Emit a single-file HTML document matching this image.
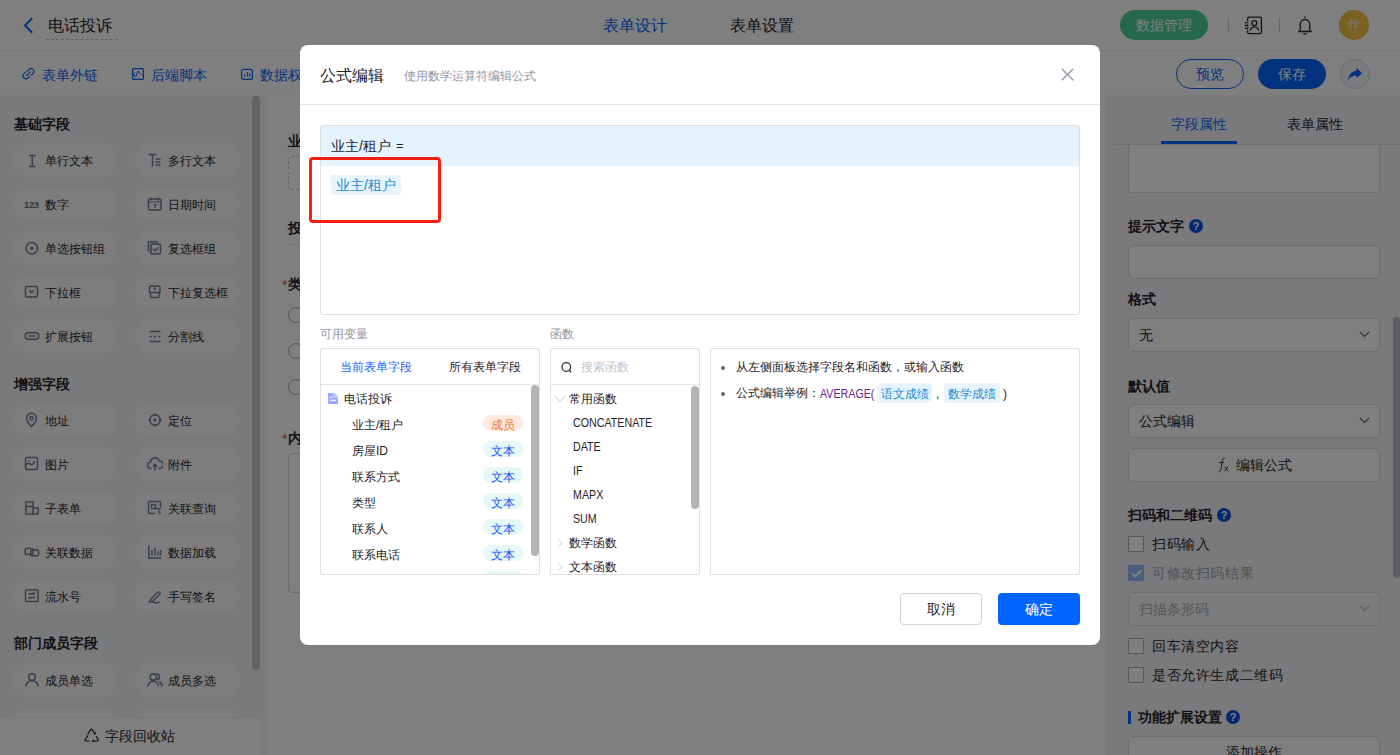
<!DOCTYPE html>
<html><head><meta charset="utf-8">
<style>
*{box-sizing:border-box;margin:0;padding:0}
html,body{width:1400px;height:755px;overflow:hidden;background:#fff;font-family:"Liberation Sans",sans-serif;color:#1f2329}
.a{position:absolute}
.t{position:absolute;white-space:nowrap;line-height:1}
.nx{transform:scaleX(.89);transform-origin:0 0}
/* header */
#hdr{left:0;top:0;width:1400px;height:51px;background:#fff;border-bottom:1px solid #efefef}
#bar2{left:0;top:51px;width:1400px;height:45px;background:#fff;border-bottom:1px solid #f9f9fa}
#side{left:0;top:96px;width:268px;height:659px;background:#f3f4f7}
.sec{font-size:14px;font-weight:bold;color:#1f2329}
.pill{position:absolute;width:105px;height:34px;border-radius:17px;background:#fbfbfc}
.pill span{position:absolute;left:33px;top:12px;font-size:12px;line-height:12px;color:#1f2329;white-space:nowrap}
.pill svg{position:absolute;left:12px;top:9px}
#canvas{left:268px;top:96px;width:838px;height:659px;background:#fff}
#rp{left:1106px;top:96px;width:294px;height:659px;background:#f4f5f8;border-left:1px solid #f0f1f4}
.inp{position:absolute;left:1128px;width:252px;border:1px solid #dcdee3;border-radius:4px;background:#fff}
.lbl{font-size:14px;font-weight:bold;color:#1f2329}
.cb{position:absolute;left:1128px;width:16px;height:16px;border:1px solid #a9adb5;border-radius:1px;background:#fff}
.help{position:absolute;width:14px;height:14px;border-radius:50%;background:#0b4fe0;color:#fff;font-size:11px;line-height:14px;text-align:center;font-weight:bold}
#mask{left:0;top:0;width:1400px;height:755px;background:rgba(0,0,0,.5)}
/* modal */
#modal{left:300px;top:45px;width:800px;height:600px;background:#fff;border-radius:8px;overflow:hidden}
</style></head><body>

<div id="hdr" class="a"></div>
<svg class="a" style="left:22px;top:17px" width="12" height="17" viewBox="0 0 12 17"><path d="M9.5 2 L3 8.5 L9.5 15" fill="none" stroke="#0565fa" stroke-width="2" stroke-linecap="square"/></svg>
<div class="t" style="left:48px;top:18px;font-size:16px;color:#1f2329">电话投诉</div>
<div class="a" style="left:46px;top:39px;width:72px;border-top:1px dashed #c6c9cf"></div>
<div class="t" style="left:603px;top:18px;font-size:16px;color:#0565fa">表单设计</div>
<div class="t" style="left:730px;top:18px;font-size:16px;color:#1f2329">表单设置</div>
<div class="a" style="left:1120px;top:10px;width:88px;height:30px;border-radius:15px;background:#4ad097"></div>
<div class="t" style="left:1136px;top:18px;font-size:14px;color:#fff">数据管理</div>
<div class="a" style="left:1228px;top:18px;width:1px;height:14px;background:#c9ccd2"></div>
<svg class="a" style="left:1244px;top:16px" width="20" height="19" viewBox="0 0 20 19"><path d="M3.6 5.2V2.6q0-1.4 1.4-1.4h11q1.4 0 1.4 1.4v13.6q0 1.4-1.4 1.4H5q-1.4 0-1.4-1.4v-2.4M3.6 8v.6M3.6 10.8v.6" fill="none" stroke="#26292e" stroke-width="1.3"/><path d="M.8 6.6h3.6M.8 9.5h3.6M.8 12.3h3.6" stroke="#26292e" stroke-width="1.3"/><circle cx="10.3" cy="7.1" r="2.5" fill="none" stroke="#26292e" stroke-width="1.3"/><path d="M6.3 14.3a4.1 4.1 0 0 1 8.1 0" fill="none" stroke="#26292e" stroke-width="1.3"/></svg>
<div class="a" style="left:1279px;top:18px;width:1px;height:14px;background:#c9ccd2"></div>
<svg class="a" style="left:1297px;top:16px" width="16" height="19" viewBox="0 0 16 19"><path d="M8 .6v1.6M3.2 14.3V8.3a4.8 4.8 0 0 1 9.6 0v6l1.4 1.2H1.8z" fill="none" stroke="#26292e" stroke-width="1.3" stroke-linejoin="round"/><path d="M6.3 17.8h3.4" stroke="#26292e" stroke-width="1.3"/></svg>
<div class="a" style="left:1339px;top:10px;width:30px;height:30px;border-radius:50%;background:#f2c443"></div>
<div class="t" style="left:1348px;top:18px;font-size:12px;color:rgba(255,255,255,.85)">作</div>
<div id="bar2" class="a"></div>
<svg class="a" style="left:22px;top:67px" width="13" height="13" viewBox="0 0 13 13"><path d="M5.2 4.1l1.7-1.7a2.9 2.9 0 0 1 4.1 4.1L9.3 8.2M7.6 9.3l-1.7 1.7a2.9 2.9 0 0 1-4.1-4.1L3.5 5.2M4.8 8.4l3.6-3.6" fill="none" stroke="#0565fa" stroke-width="1.2" stroke-linecap="round"/></svg>
<div class="t" style="left:42px;top:68px;font-size:14px;color:#0565fa">表单外链</div>
<svg class="a" style="left:132px;top:68px" width="12" height="12" viewBox="0 0 12 12"><rect x=".6" y=".6" width="10.8" height="10.8" rx="1" fill="none" stroke="#0565fa" stroke-width="1.2"/><path d="M.8 6.5l2.3-2M.8 6.5l2.5 2M3.8 8.8l2.3-5.8 2.5 3M11.2 6.5l-1 .8" fill="none" stroke="#0565fa" stroke-width="1"/></svg>
<div class="t" style="left:151px;top:68px;font-size:14px;color:#0565fa">后端脚本</div>
<svg class="a" style="left:241px;top:68px" width="12" height="12" viewBox="0 0 12 12"><rect x=".6" y="1.4" width="10.8" height="10" rx="2" fill="none" stroke="#0565fa" stroke-width="1.2"/><path d="M3.5 8.8V6.2M6.3 8.8V4M8.6 8.8V5.4" stroke="#0565fa" stroke-width="1.1"/></svg>
<div class="t" style="left:260px;top:68px;font-size:14px;color:#0565fa">数据权限</div>
<div class="a" style="left:1176px;top:59px;width:68px;height:30px;border-radius:15px;border:1px solid #0565fa;background:#fff"></div>
<div class="t" style="left:1196px;top:67px;font-size:14px;color:#0565fa">预览</div>
<div class="a" style="left:1258px;top:59px;width:68px;height:30px;border-radius:15px;background:#0565fa"></div>
<div class="t" style="left:1278px;top:67px;font-size:14px;color:#fff">保存</div>
<div class="a" style="left:1340px;top:59px;width:30px;height:30px;border-radius:50%;background:#f5f7fc;border:1px solid #cfd8ea"></div>
<svg class="a" style="left:1347px;top:66px" width="16" height="16" viewBox="0 0 16 16"><path d="M9.5 1.8L15 7.3l-5.5 5V9.6c-3.7 0-6.3 1.3-8.3 4.4.4-5 3.2-8.8 8.3-9.6z" fill="#0565fa"/></svg>
<div id="side" class="a"></div>
<div class="t sec" style="left:14px;top:117px">基础字段</div>
<div class="pill" style="left:12px;top:143px"><svg width="16" height="16" viewBox="0 0 16 16"><path d="M5 3.5h6.5M5 14.5h6.5M8.2 3.5v11" fill="none" stroke="#717c97" stroke-width="1.5"/></svg><span>单行文本</span></div>
<div class="pill" style="left:135px;top:143px"><svg width="16" height="16" viewBox="0 0 16 16"><path d="M1.5 2.5h8M5.5 2.5v12M8.5 7h5M8.5 10h5M8.5 13h5" fill="none" stroke="#717c97" stroke-width="1.5"/></svg><span>多行文本</span></div>
<div class="pill" style="left:12px;top:187px"><svg width="16" height="16" viewBox="0 0 16 16"><text x="0" y="11.5" font-size="9.5" font-weight="bold" fill="#5f6a85" font-family="Liberation Sans" letter-spacing="-0.4">123</text></svg><span>数字</span></div>
<div class="pill" style="left:135px;top:187px"><svg width="16" height="16" viewBox="0 0 16 16"><rect x="1.5" y="3" width="12.5" height="11" rx="1.5" fill="none" stroke="#717c97" stroke-width="1.5"/><path d="M1.5 6h12.5M4.5 1.5v3M11 1.5v3M6.5 8.5h2.5l-1.3 3.5" fill="none" stroke="#717c97" stroke-width="1.2"/></svg><span>日期时间</span></div>
<div class="pill" style="left:12px;top:231px"><svg width="16" height="16" viewBox="0 0 16 16"><circle cx="7.8" cy="8.2" r="5.7" fill="none" stroke="#717c97" stroke-width="1.5"/><circle cx="7.8" cy="8.2" r="1.7" fill="#717c97"/></svg><span>单选按钮组</span></div>
<div class="pill" style="left:135px;top:231px"><svg width="16" height="16" viewBox="0 0 16 16"><rect x="4" y="4" width="9.5" height="10" rx="1" fill="none" stroke="#717c97" stroke-width="1.5"/><path d="M1.5 11.5V1.8h9.5" fill="none" stroke="#717c97" stroke-width="1.5"/><path d="M6 8.8l2 2 3.3-3.6" fill="none" stroke="#717c97" stroke-width="1.5"/></svg><span>复选框组</span></div>
<div class="pill" style="left:12px;top:275px"><svg width="16" height="16" viewBox="0 0 16 16"><rect x="1.5" y="2.5" width="12" height="10.5" rx="1.5" fill="none" stroke="#717c97" stroke-width="1.5"/><path d="M5.2 6.2l2.3 2.3 2.3-2.3" fill="none" stroke="#717c97" stroke-width="1.5"/></svg><span>下拉框</span></div>
<div class="pill" style="left:135px;top:275px"><svg width="16" height="16" viewBox="0 0 16 16"><path d="M2.5 8.5V3.5a1.5 1.5 0 0 1 1.5-1.5h7.5a1.5 1.5 0 0 1 1.5 1.5v5zM3.5 8.5v4a1 1 0 0 0 1 1h6.5a1 1 0 0 0 1-1v-4M6.8 3.8l1 1.2 1-1.2" fill="none" stroke="#717c97" stroke-width="1.5"/></svg><span>下拉复选框</span></div>
<div class="pill" style="left:12px;top:319px"><svg width="16" height="16" viewBox="0 0 16 16"><rect x="1.2" y="4.8" width="13.5" height="6.5" rx="3.25" fill="none" stroke="#717c97" stroke-width="1.5"/><path d="M4.5 8h7" fill="none" stroke="#717c97" stroke-width="1.5"/></svg><span>扩展按钮</span></div>
<div class="pill" style="left:135px;top:319px"><svg width="16" height="16" viewBox="0 0 16 16"><path d="M2.5 3.5h11M2.5 13.5h11M2.5 8.5h2.5M6.7 8.5h2.6M11 8.5h2.5" fill="none" stroke="#717c97" stroke-width="1.5"/></svg><span>分割线</span></div>
<div class="t sec" style="left:14px;top:377px">增强字段</div>
<div class="pill" style="left:12px;top:403px"><svg width="16" height="16" viewBox="0 0 16 16"><path d="M7.5 14.5s-5-4.6-5-8.3a5 5 0 0 1 10 0c0 3.7-5 8.3-5 8.3z" fill="none" stroke="#717c97" stroke-width="1.5"/><circle cx="7.5" cy="6.2" r="1.7" fill="none" stroke="#717c97" stroke-width="1.5"/></svg><span>地址</span></div>
<div class="pill" style="left:135px;top:403px"><svg width="16" height="16" viewBox="0 0 16 16"><circle cx="8" cy="8" r="5.2" fill="none" stroke="#717c97" stroke-width="1.5"/><circle cx="8" cy="8" r="1.5" fill="#717c97"/><path d="M8 1.5v2.5M8 12v2.5M1.5 8h2.5M12 8h2.5" fill="none" stroke="#717c97" stroke-width="1.5"/></svg><span>定位</span></div>
<div class="pill" style="left:12px;top:447px"><svg width="16" height="16" viewBox="0 0 16 16"><rect x="1.5" y="1.5" width="12" height="12" rx="1.5" fill="none" stroke="#717c97" stroke-width="1.5"/><path d="M1.8 9.5c1.5-2.5 3-3 4.5-1.5s3 .3 4.5-3" fill="none" stroke="#717c97" stroke-width="1.5"/><circle cx="5" cy="5" r=".9" fill="#717c97"/></svg><span>图片</span></div>
<div class="pill" style="left:135px;top:447px"><svg width="16" height="16" viewBox="0 0 16 16"><path d="M4.5 12.5H4a3.2 3.2 0 0 1-.5-6.4A4.5 4.5 0 0 1 12.2 5a3.4 3.4 0 0 1 .3 7.5H11.5M8 14.5V8.5M5.8 10.5L8 8.3l2.2 2.2" fill="none" stroke="#717c97" stroke-width="1.5"/></svg><span>附件</span></div>
<div class="pill" style="left:12px;top:491px"><svg width="16" height="16" viewBox="0 0 16 16"><path d="M2 2h7v12H2zM9 8h5v6H9M2 6.5h7" fill="none" stroke="#717c97" stroke-width="1.5"/></svg><span>子表单</span></div>
<div class="pill" style="left:135px;top:491px"><svg width="16" height="16" viewBox="0 0 16 16"><path d="M13.5 8V2.5a1 1 0 0 0-1-1h-10a1 1 0 0 0-1 1v10a1 1 0 0 0 1 1H8" fill="none" stroke="#717c97" stroke-width="1.5"/><rect x="4.5" y="4.5" width="4" height="4" fill="none" stroke="#717c97" stroke-width="1.5"/><path d="M8.5 8.5h3l1.8 1.8M11 11l2.5 2.5" fill="none" stroke="#717c97" stroke-width="1.5"/></svg><span>关联查询</span></div>
<div class="pill" style="left:12px;top:535px"><svg width="16" height="16" viewBox="0 0 16 16"><rect x="1.2" y="4.5" width="7.8" height="6" rx="1.8" fill="none" stroke="#717c97" stroke-width="1.5"/><rect x="6.8" y="5.8" width="7.8" height="6" rx="1.8" fill="none" stroke="#717c97" stroke-width="1.5"/></svg><span>关联数据</span></div>
<div class="pill" style="left:135px;top:535px"><svg width="16" height="16" viewBox="0 0 16 16"><path d="M1.8 1.5v12.5H14.5M5 11.5V6M8 11.5V4M11 11.5V7.5M13.5 11.5V6" fill="none" stroke="#717c97" stroke-width="1.5"/></svg><span>数据加载</span></div>
<div class="pill" style="left:12px;top:579px"><svg width="16" height="16" viewBox="0 0 16 16"><rect x="1.5" y="2" width="12.5" height="11.5" rx="1" fill="none" stroke="#717c97" stroke-width="1.5"/><path d="M4.5 5.8h6.5M4.5 9.5h6.5M9 4.5l1.5 1.3M6 10.8L4.5 9.5" fill="none" stroke="#717c97" stroke-width="1.5"/></svg><span>流水号</span></div>
<div class="pill" style="left:135px;top:579px"><svg width="16" height="16" viewBox="0 0 16 16"><path d="M3.5 11.5l7.2-7.2a1.4 1.4 0 0 1 2 2L5.5 13.5H3.5zM1.5 14.5c2-1 3.5-1 5 0s3.5.5 6-.5" fill="none" stroke="#717c97" stroke-width="1.5"/></svg><span>手写签名</span></div>
<div class="t sec" style="left:14px;top:636px">部门成员字段</div>
<div class="pill" style="left:12px;top:663px"><svg width="16" height="16" viewBox="0 0 16 16"><circle cx="8" cy="5" r="3.3" fill="none" stroke="#717c97" stroke-width="1.5"/><path d="M2 14.5a6 6 0 0 1 12 0" fill="none" stroke="#717c97" stroke-width="1.5"/></svg><span>成员单选</span></div>
<div class="pill" style="left:135px;top:663px"><svg width="16" height="16" viewBox="0 0 16 16"><circle cx="6.3" cy="5" r="3.2" fill="none" stroke="#717c97" stroke-width="1.5"/><path d="M1 14.5a5.3 5.3 0 0 1 10.6 0M10 1.8a3.2 3.2 0 0 1 0 6.2M12.3 9.5a5.3 5.3 0 0 1 2.5 5" fill="none" stroke="#717c97" stroke-width="1.5"/></svg><span>成员多选</span></div>
<div class="pill" style="left:12px;top:707px"><svg width="16" height="16" viewBox="0 0 16 16"><circle cx="8" cy="5" r="3.3" fill="none" stroke="#717c97" stroke-width="1.5"/><path d="M2 14.5a6 6 0 0 1 12 0" fill="none" stroke="#717c97" stroke-width="1.5"/></svg><span>部门单选</span></div>
<div class="pill" style="left:135px;top:707px"><svg width="16" height="16" viewBox="0 0 16 16"><circle cx="6.3" cy="5" r="3.2" fill="none" stroke="#717c97" stroke-width="1.5"/><path d="M1 14.5a5.3 5.3 0 0 1 10.6 0M10 1.8a3.2 3.2 0 0 1 0 6.2M12.3 9.5a5.3 5.3 0 0 1 2.5 5" fill="none" stroke="#717c97" stroke-width="1.5"/></svg><span>部门多选</span></div>
<div class="a" style="left:252px;top:96px;width:8px;height:574px;border-radius:4px;background:#c4c6cb"></div>
<div class="a" style="left:0;top:717px;width:260px;height:38px;background:#fff;border-top:1px solid #eef0f3"></div>
<svg class="a" style="left:84px;top:728px" width="16" height="15" viewBox="0 0 16 15"><path d="M3.8 6.2L6.7 1.6q.8-1.1 1.6 0l2.4 4M12.2 8.2l2 3.6q.5 1.2-.8 1.2H8.8M5.8 13H1.9q-1.3 0-.7-1.2l1.4-2.4" fill="none" stroke="#1f2329" stroke-width="1.2"/><path d="M9.4 6.8l2.6-.6-.2-2.4zM9.8 11.3l-2 1.7 2 1.7zM1.8 7.8l1.6 1.9 1.1-2.4z" fill="#1f2329"/></svg>
<div class="t" style="left:105px;top:729px;font-size:14px;color:#1f2329">字段回收站</div>
<div id="canvas" class="a"></div>
<div class="t" style="left:288px;top:134px;font-size:14px;font-weight:bold;color:#1f2329">业主/租户</div>
<div class="a" style="left:288px;top:156px;width:300px;height:34px;border:1px dashed #c9ccd2;border-radius:4px"></div>
<div class="t" style="left:288px;top:221px;font-size:14px;font-weight:bold;color:#1f2329">投诉信息</div>
<div class="a" style="left:288px;top:244px;width:800px;height:1px;background:#e4e6ea"></div>
<div class="t" style="left:282px;top:278px;font-size:14px;color:#e8443a">*</div>
<div class="t" style="left:288px;top:277px;font-size:14px;font-weight:bold;color:#1f2329">类型</div>
<div class="a" style="left:288px;top:307px;width:16px;height:16px;border:1px solid #a5a9ba;border-radius:50%"></div>
<div class="a" style="left:288px;top:343px;width:16px;height:16px;border:1px solid #a5a9ba;border-radius:50%"></div>
<div class="a" style="left:288px;top:379px;width:16px;height:16px;border:1px solid #a5a9ba;border-radius:50%"></div>
<div class="t" style="left:282px;top:432px;font-size:14px;color:#e8443a">*</div>
<div class="t" style="left:288px;top:431px;font-size:14px;font-weight:bold;color:#1f2329">内容</div>
<div class="a" style="left:288px;top:453px;width:800px;height:140px;border:1px solid #d5d8dd;border-radius:4px"></div>
<div id="rp" class="a"></div>
<div class="inp" style="top:140px;height:53px;border-top:none;border-radius:0 0 4px 4px"></div>
<div class="a" style="left:1107px;top:96px;width:293px;height:48px;background:#f4f5f8"></div>
<div class="a" style="left:1114px;top:144px;width:286px;height:1px;background:#dcdfe4"></div>
<div class="a" style="left:1161px;top:141px;width:76px;height:3px;background:#0565fa"></div>
<div class="t" style="left:1171px;top:117px;font-size:14px;color:#0565fa">字段属性</div>
<div class="t" style="left:1287px;top:117px;font-size:14px;color:#1f2329">表单属性</div>
<div class="t lbl" style="left:1128px;top:219px">提示文字</div>
<div class="help" style="left:1189px;top:219px">?</div>
<div class="inp" style="top:245px;height:34px"></div>
<div class="t lbl" style="left:1128px;top:292px">格式</div>
<div class="inp" style="top:318px;height:34px"></div>
<div class="t" style="left:1139px;top:328px;font-size:14px;color:#1f2329">无</div>
<svg class="a" style="left:1359px;top:331px" width="11" height="7" viewBox="0 0 11 7"><path d="M.8 .8l4.7 4.7L10.2.8" fill="none" stroke="#555b64" stroke-width="1.2"/></svg>
<div class="t lbl" style="left:1128px;top:379px">默认值</div>
<div class="inp" style="top:404px;height:34px"></div>
<div class="t" style="left:1139px;top:414px;font-size:14px;color:#1f2329">公式编辑</div>
<svg class="a" style="left:1359px;top:417px" width="11" height="7" viewBox="0 0 11 7"><path d="M.8 .8l4.7 4.7L10.2.8" fill="none" stroke="#555b64" stroke-width="1.2"/></svg>
<div class="inp" style="top:448px;height:34px"></div>
<svg class="a" style="left:1217px;top:457px" width="14" height="16" viewBox="0 0 14 16"><path d="M8.3 1.3c-1.6-.6-2.6.2-2.9 2L4 12.5c-.3 1.8-1.2 2.5-2.5 2.2M1.8 5.5h5" fill="none" stroke="#3a3f47" stroke-width="1"/><path d="M7.6 9.6l3.6 4.6M11.2 9.6l-3.6 4.6" stroke="#3a3f47" stroke-width="1"/></svg>
<div class="t" style="left:1236px;top:458px;font-size:14px;color:#1f2329">编辑公式</div>
<div class="t lbl" style="left:1128px;top:508px">扫码和二维码</div>
<div class="help" style="left:1217px;top:508px">?</div>
<div class="cb" style="top:536px"></div>
<div class="t" style="left:1152px;top:537px;font-size:14px;color:#1f2329;letter-spacing:.6px">扫码输入</div>
<div class="cb" style="top:565px;background:#90bcff;border-color:#90bcff"></div>
<svg class="a" style="left:1131px;top:569px" width="11" height="9" viewBox="0 0 11 9"><path d="M1 4.3l3.2 3.2L10 1.5" fill="none" stroke="#fff" stroke-width="2"/></svg>
<div class="t" style="left:1152px;top:566px;font-size:14px;color:#9ea3ab;letter-spacing:.6px">可修改扫码结果</div>
<div class="inp" style="top:592px;height:34px;background:#f9f9fa"></div>
<div class="t" style="left:1139px;top:602px;font-size:14px;color:#a9adb4">扫描条形码</div>
<svg class="a" style="left:1359px;top:605px" width="11" height="7" viewBox="0 0 11 7"><path d="M.8 .8l4.7 4.7L10.2.8" fill="none" stroke="#b5b9c0" stroke-width="1.2"/></svg>
<div class="cb" style="top:638px"></div>
<div class="t" style="left:1152px;top:639px;font-size:14px;color:#1f2329;letter-spacing:.6px">回车清空内容</div>
<div class="cb" style="top:667px"></div>
<div class="t" style="left:1152px;top:668px;font-size:14px;color:#1f2329;letter-spacing:.6px">是否允许生成二维码</div>
<div class="a" style="left:1128px;top:711px;width:3px;height:13px;background:#0565fa"></div>
<div class="t lbl" style="left:1138px;top:710px">功能扩展设置</div>
<div class="help" style="left:1226px;top:710px">?</div>
<div class="inp" style="top:736px;height:34px;background:#fff"></div>
<div class="t" style="left:1226px;top:745px;font-size:14px;color:#1f2329">添加操作</div>
<div class="a" style="left:1393px;top:317px;width:7px;height:261px;border-radius:3px;background:#b9bcc2"></div>

<div id="mask" class="a"></div>

<div id="modal" class="a"></div>
<div class="t" style="left:320px;top:68px;font-size:16px;color:#1f2329">公式编辑</div>
<div class="t" style="left:404px;top:70px;font-size:12px;color:#8f959e">使用数学运算符编辑公式</div>
<svg class="a" style="left:1061px;top:68px" width="13" height="13" viewBox="0 0 13 13"><path d="M.7 .7l11.6 11.6M12.3 .7L.7 12.3" stroke="#8f959e" stroke-width="1.3"/></svg>
<div class="a" style="left:300px;top:104px;width:800px;height:1px;background:#e8e9eb"></div>
<div class="a" style="left:320px;top:125px;width:760px;height:190px;border:1px solid #e0e0e0;border-radius:2px"></div>
<div class="a" style="left:321px;top:126px;width:758px;height:40px;background:#e5f3fe"></div>
<div class="t" style="left:331px;top:139px;font-size:14px;color:#1f2329">业主/租户</div>
<div class="t" style="left:396px;top:139px;font-size:13px;color:#1f2329">=</div>
<div class="a" style="left:331px;top:175px;width:70px;height:20px;border-radius:2px;background:#e8f4fd"></div>
<div class="t" style="left:336px;top:178px;font-size:14px;color:#1a8ccf">业主/租户</div>
<div class="a" style="left:309px;top:157px;width:132px;height:66px;border:3px solid #fa1e12;border-radius:4px"></div>

<div class="t" style="left:320px;top:328px;font-size:12px;color:#8f959e">可用变量</div>
<div class="t" style="left:550px;top:328px;font-size:12px;color:#8f959e">函数</div>

<div class="a" style="left:320px;top:348px;width:220px;height:227px;border:1px solid #e0e0e0;border-radius:2px"></div>
<div class="a" style="left:321px;top:384px;width:218px;height:1px;background:#e6e6e6"></div>
<div class="t" style="left:340px;top:361px;font-size:12px;color:#1f5cff">当前表单字段</div>
<div class="t" style="left:449px;top:361px;font-size:12px;color:#1f2329">所有表单字段</div>
<svg class="a" style="left:328px;top:393px" width="10" height="11" viewBox="0 0 10 11"><path d="M0 0h6.3L10 3.7V11H0z" fill="#9aacff"/><path d="M6.3 0v3.7H10" fill="none" stroke="#e6ebff" stroke-width=".8"/><path d="M1.8 4.3h3M1.8 7.3h6.4" stroke="#fff" stroke-width="1"/></svg>
<div class="t" style="left:344px;top:393px;font-size:12px;color:#1f2329">电话投诉</div>
<div class="a" style="left:321px;top:385px;width:218px;height:189px;overflow:hidden">
<div class="t" style="left:31px;top:34px;font-size:12px;color:#1f2329">业主/租户</div>
<div class="a" style="left:162px;top:30px;width:40px;height:16px;border-radius:8px;background:#fde9df"></div>
<div class="t" style="left:170px;top:34px;font-size:12px;color:#f0752f">成员</div>
<div class="t" style="left:31px;top:60px;font-size:12px;color:#1f2329">房屋ID</div>
<div class="a" style="left:162px;top:56px;width:40px;height:16px;border-radius:8px;background:#e5f7f6"></div>
<div class="t" style="left:170px;top:60px;font-size:12px;color:#1258ff">文本</div>
<div class="t" style="left:31px;top:86px;font-size:12px;color:#1f2329">联系方式</div>
<div class="a" style="left:162px;top:82px;width:40px;height:16px;border-radius:8px;background:#e5f7f6"></div>
<div class="t" style="left:170px;top:86px;font-size:12px;color:#1258ff">文本</div>
<div class="t" style="left:31px;top:112px;font-size:12px;color:#1f2329">类型</div>
<div class="a" style="left:162px;top:108px;width:40px;height:16px;border-radius:8px;background:#e5f7f6"></div>
<div class="t" style="left:170px;top:112px;font-size:12px;color:#1258ff">文本</div>
<div class="t" style="left:31px;top:138px;font-size:12px;color:#1f2329">联系人</div>
<div class="a" style="left:162px;top:134px;width:40px;height:16px;border-radius:8px;background:#e5f7f6"></div>
<div class="t" style="left:170px;top:138px;font-size:12px;color:#1258ff">文本</div>
<div class="t" style="left:31px;top:164px;font-size:12px;color:#1f2329">联系电话</div>
<div class="a" style="left:162px;top:160px;width:40px;height:16px;border-radius:8px;background:#e5f7f6"></div>
<div class="t" style="left:170px;top:164px;font-size:12px;color:#1258ff">文本</div>
<div class="t" style="left:31px;top:190px;font-size:12px;color:#1f2329">地址</div>
<div class="a" style="left:162px;top:186px;width:40px;height:16px;border-radius:8px;background:#e5f7f6"></div>
<div class="t" style="left:170px;top:190px;font-size:12px;color:#1258ff">文本</div>
</div>
<div class="a" style="left:531px;top:385px;width:8px;height:171px;border-radius:4px;background:#b4b4b4"></div>

<div class="a" style="left:550px;top:348px;width:150px;height:227px;border:1px solid #e0e0e0;border-radius:2px"></div>
<div class="a" style="left:551px;top:384px;width:148px;height:1px;background:#e6e6e6"></div>
<svg class="a" style="left:561px;top:362px" width="12" height="12" viewBox="0 0 12 12"><circle cx="5.3" cy="5" r="4.3" fill="none" stroke="#2a2d33" stroke-width="1.25"/><path d="M8.4 8.2l1.8 2" stroke="#2a2d33" stroke-width="1.3"/></svg>
<div class="t" style="left:581px;top:361px;font-size:12px;color:#c2c6cc">搜索函数</div>
<svg class="a" style="left:554px;top:395px" width="12" height="8" viewBox="0 0 12 8"><path d="M.6 .8l5.4 5.6 5.4-5.6" fill="none" stroke="#c3cede" stroke-width="1"/></svg>
<div class="t" style="left:569px;top:393px;font-size:12px;color:#1f2329">常用函数</div>
<div class="t nx" style="left:573px;top:417px;font-size:12px;color:#1f2329">CONCATENATE</div>
<div class="t nx" style="left:573px;top:441px;font-size:12px;color:#1f2329">DATE</div>
<div class="t nx" style="left:573px;top:465px;font-size:12px;color:#1f2329">IF</div>
<div class="t nx" style="left:573px;top:489px;font-size:12px;color:#1f2329">MAPX</div>
<div class="t nx" style="left:573px;top:513px;font-size:12px;color:#1f2329">SUM</div>
<svg class="a" style="left:558px;top:539px" width="5" height="8" viewBox="0 0 5 8"><path d="M.6 .6l3.4 3.4-3.4 3.4" fill="none" stroke="#c3cede" stroke-width="1"/></svg>
<div class="t" style="left:569px;top:537px;font-size:12px;color:#1f2329">数学函数</div>
<svg class="a" style="left:558px;top:563px" width="5" height="8" viewBox="0 0 5 8"><path d="M.6 .6l3.4 3.4-3.4 3.4" fill="none" stroke="#c3cede" stroke-width="1"/></svg>
<div class="t" style="left:569px;top:561px;font-size:12px;color:#1f2329">文本函数</div>
<div class="a" style="left:691px;top:386px;width:8px;height:123px;border-radius:4px;background:#b4b4b4"></div>

<div class="a" style="left:710px;top:348px;width:370px;height:227px;border:1px solid #e0e0e0;border-radius:2px"></div>
<div class="a" style="left:721px;top:366px;width:4px;height:4px;border-radius:50%;background:#5f6672"></div>
<div class="t" style="left:736px;top:361px;font-size:12px;color:#1f2329">从左侧面板选择字段名和函数，或输入函数</div>
<div class="a" style="left:721px;top:392px;width:4px;height:4px;border-radius:50%;background:#5f6672"></div>
<div class="t" style="left:736px;top:387px;font-size:12px;color:#1f2329">公式编辑举例：</div>
<div class="t nx" style="left:820px;top:388px;font-size:12px;color:#6a1e8e">AVERAGE(</div>
<div class="a" style="left:877px;top:383px;width:55px;height:20px;border-radius:3px;background:#e8f4fd"></div>
<div class="t" style="left:881px;top:388px;font-size:12px;color:#1a8ccf">语文成绩</div>
<div class="t" style="left:936px;top:388px;font-size:12px;color:#1f2329">,</div>
<div class="a" style="left:944px;top:383px;width:56px;height:20px;border-radius:3px;background:#e8f4fd"></div>
<div class="t" style="left:948px;top:388px;font-size:12px;color:#1a8ccf">数学成绩</div>
<div class="t" style="left:1003px;top:388px;font-size:12px;color:#1f2329">)</div>

<div class="a" style="left:900px;top:593px;width:82px;height:32px;border:1px solid #d0d3d9;border-radius:4px;background:#fff"></div>
<div class="t" style="left:927px;top:602px;font-size:14px;color:#1f2329">取消</div>
<div class="a" style="left:998px;top:593px;width:82px;height:32px;border-radius:4px;background:#0064ff"></div>
<div class="t" style="left:1025px;top:602px;font-size:14px;color:#fff">确定</div>

</body></html>
